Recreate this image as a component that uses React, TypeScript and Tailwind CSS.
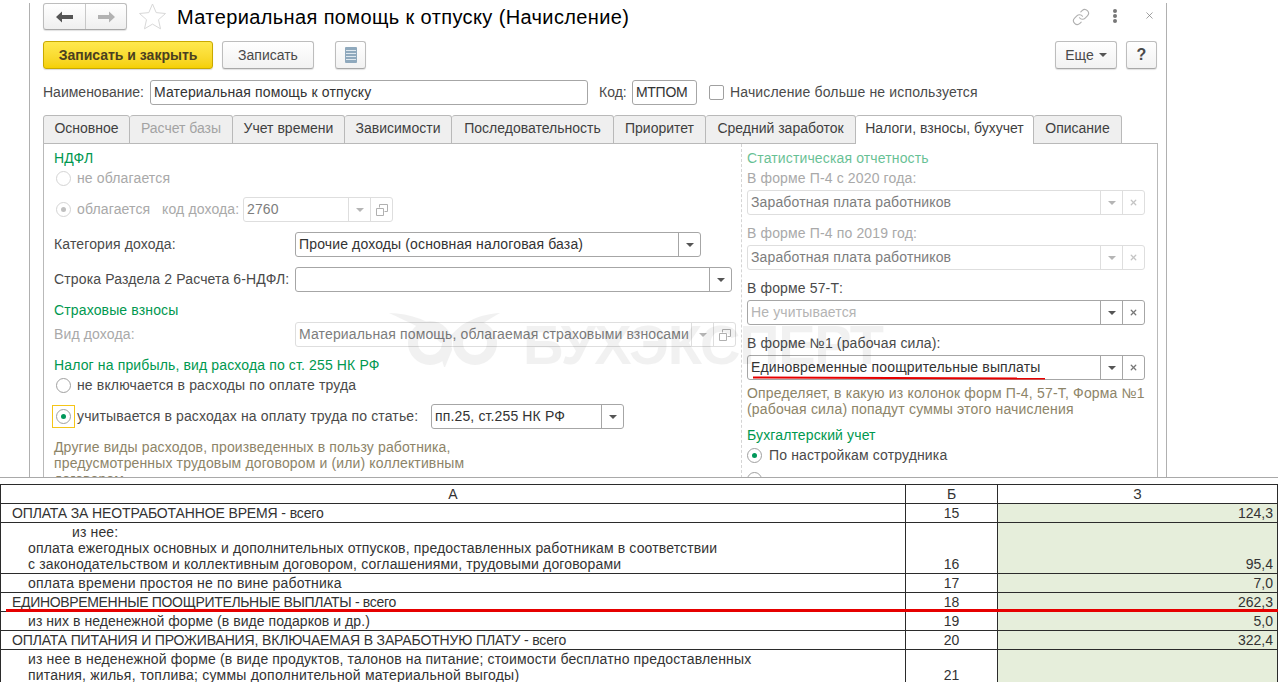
import { ReactNode } from "react";
import { Link, X } from "lucide-react";

const font = { fontFamily: '"Liberation Sans", Arial, sans-serif' };

const tabs = [
  { label: "Основное", w: "w-[87px]" },
  { label: "Расчет базы", w: "w-[103px]", off: true },
  { label: "Учет времени", w: "w-[112px]" },
  { label: "Зависимости", w: "w-[107px]" },
  { label: "Последовательность", w: "w-[162px]" },
  { label: "Приоритет", w: "w-[92px]" },
  { label: "Средний заработок", w: "w-[150px]" },
  { label: "Налоги, взносы, бухучет", w: "w-[178px]", active: true },
  { label: "Описание", w: "w-[88px]" },
];

const rows = [
  { h: "h-[19px]", a: "ОПЛАТА ЗА НЕОТРАБОТАННОЕ ВРЕМЯ - всего", pad: "pl-[11px] tracking-[-0.13px]", b: "15", c: "124,3" },
  {
    h: "h-[51px]",
    a: (
      <>
        <span className="block pl-[44px]">из нее:</span>
        оплата ежегодных основных и дополнительных отпусков, предоставленных работникам в соответствии
        <br />с законодательством и коллективным договором, соглашениями, трудовыми договорами
      </>
    ),
    pad: "pl-[27px] tracking-[0.145px]",
    b: "16",
    c: "95,4",
  },
  { h: "h-[19px]", a: "оплата времени простоя не по вине работника", pad: "pl-[27px] tracking-[0.2px]", b: "17", c: "7,0" },
  { h: "h-[19px]", a: "ЕДИНОВРЕМЕННЫЕ ПООЩРИТЕЛЬНЫЕ ВЫПЛАТЫ - всего", pad: "pl-[11px] tracking-[-0.33px]", b: "18", c: "262,3" },
  { h: "h-[19px]", a: "из них в неденежной форме (в виде подарков и др.)", pad: "pl-[27px] tracking-[0.06px]", b: "19", c: "5,0" },
  { h: "h-[19px]", a: "ОПЛАТА ПИТАНИЯ И ПРОЖИВАНИЯ, ВКЛЮЧАЕМАЯ В ЗАРАБОТНУЮ ПЛАТУ - всего", pad: "pl-[11px] tracking-[-0.15px]", b: "20", c: "322,4" },
  {
    h: "h-[35px]",
    a: (
      <>
        <span className="tracking-[0.15px]">
          из нее в неденежной форме (в виде продуктов, талонов на питание; стоимости бесплатно предоставленных
        </span>
        <br />
        <span className="tracking-[0.22px]">питания, жилья, топлива; суммы дополнительной материальной выгоды)</span>
      </>
    ),
    pad: "pl-[27px]",
    b: "21",
    c: "",
  },
];

function Caret({ off }: { off?: boolean }) {
  return (
    <svg width="8" height="4" viewBox="0 0 8 4">
      <path d="M0 0h8L4 4z" fill={off ? "#b5b5b5" : "#555"} />
    </svg>
  );
}

function CopyIcon() {
  return (
    <svg width="12" height="12" viewBox="0 0 12 12" fill="none" stroke="#b0b0b0">
      <path d="M3.5 3.5v-3h8v7h-3" />
      <path d="M.5 4.5h7v7h-7z" />
    </svg>
  );
}

function Cross({ off }: { off?: boolean }) {
  return <X size={9} strokeWidth={3.5} color={off ? "#c4c4c4" : "#777"} />;
}

// поле ввода 1С: текст и кнопки справа
function Field({
  w,
  text,
  off,
  placeholder,
  icons,
}: {
  w: string;
  text?: string;
  off?: boolean;
  placeholder?: boolean;
  icons: ReactNode[];
}) {
  return (
    <div
      className={`${w} h-[25px] flex rounded-[3px] border bg-white shrink-0 ${off ? "border-[#dedede]" : "border-[#a6a6a6]"}`}
    >
      <div
        className={`flex-1 min-w-0 pl-[3px] leading-[23px] whitespace-nowrap overflow-hidden ${
          placeholder ? "text-[#b4b4b4]" : off ? "text-[#7d7d7d]" : "text-[#333]"
        }`}
      >
        {text}
      </div>
      {icons.map((ic, i) => (
        <div
          key={i}
          className={`w-[22px] flex items-center justify-center border-l ${off ? "border-[#dedede]" : "border-[#a6a6a6]"}`}
        >
          {ic}
        </div>
      ))}
    </div>
  );
}

function Radio({ on, off }: { on?: boolean; off?: boolean }) {
  return (
    <span
      className={`w-[15px] h-[15px] rounded-full border flex items-center justify-center shrink-0 bg-white ${
        off ? "border-[#d4d4d4]" : "border-[#a0a0a0]"
      }`}
    >
      {on && <span className={`w-[5px] h-[5px] rounded-full ${off ? "bg-[#c0c0c0]" : "bg-[#00985a]"}`} />}
    </span>
  );
}

function Btn({ w, children, className = "" }: { w: string; children: ReactNode; className?: string }) {
  return (
    <div
      className={`${w} h-[28px] flex items-center justify-center rounded-[3px] border border-[#bdbdbd] border-b-[#a8a8a8] bg-gradient-to-b from-white to-[#f2f2f2] shadow-[0_1px_1px_rgba(0,0,0,0.12)] text-[#4a4a4a] ${className}`}
    >
      {children}
    </div>
  );
}

function Section({ children, className = "" }: { children: ReactNode; className?: string }) {
  return <div className={`h-[16px] leading-[16px] text-[#00984f] ${className}`}>{children}</div>;
}

function Label({ children, className = "text-[#4a4a4a]" }: { children: ReactNode; className?: string }) {
  return <div className={`h-[16px] leading-[16px] whitespace-nowrap ${className}`}>{children}</div>;
}

export default function App() {
  return (
    <div className="relative w-[1278px] h-[682px] overflow-hidden bg-white text-[14px]" style={font}>
      {/* форма 1С */}
      <div className="h-[478px] border-b border-[#a9a9a9] overflow-hidden">
        <div className="relative ml-[29px] w-[1138px] h-full border-x border-[#b0b0b0] pl-[13px] pr-[8px]">
          <div className="flex items-center h-[27px] mt-[3px] pr-[1px]">
            <div className="flex w-[84px] h-[27px] rounded-[3px] border border-[#bdbdbd] border-b-[#a8a8a8] bg-gradient-to-b from-white to-[#efefef] shadow-[0_1px_1px_rgba(0,0,0,0.12)]">
              <div className="w-[42px] flex items-center justify-center border-r border-[#c8c8c8]">
                <svg width="17" height="12" viewBox="0 0 17 12">
                  <path d="M0 6l6-5.5V4h11v4H6v3.5z" fill="#555" />
                </svg>
              </div>
              <div className="flex-1 flex items-center justify-center">
                <svg width="17" height="12" viewBox="0 0 17 12">
                  <path d="M17 6l-6-5.5V4H0v4h11v3.5z" fill="#b2b2b2" />
                </svg>
              </div>
            </div>
            <svg className="ml-[12px]" width="27" height="27" viewBox="0 0 27 27" fill="#fff" stroke="#d8d8d8">
              <path d="M13.5 1l3.7 8.6 9.3.9-7 6.2 2 9.1-8-4.7-8 4.7 2-9.1-7-6.2 9.3-.9z" />
            </svg>
            <div className="ml-[11px] text-[20px] tracking-[0.38px] text-black whitespace-nowrap">
              Материальная помощь к отпуску (Начисление)
            </div>
            <Link className="ml-auto mr-[23px]" size={18} color="#b0b0b0" strokeWidth={1.5} />
            <div className="flex flex-col gap-[1px] mr-[27px] -mt-[2px]">
              <span className="w-[4px] h-[4px] rounded-full bg-[#777]" />
              <span className="w-[4px] h-[4px] rounded-full bg-[#777]" />
              <span className="w-[4px] h-[4px] rounded-full bg-[#777]" />
            </div>
            <X className="mr-[2px] -mt-[2px]" size={11} color="#777" strokeWidth={1.5} />
          </div>

          <div className="flex items-center mt-[11px]">
            <div className="w-[170px] h-[28px] flex items-center justify-center rounded-[3px] border border-[#c9a900] bg-gradient-to-b from-[#ffe94d] to-[#f5d000] font-bold text-[#4a4020] shadow-[0_1px_1px_rgba(0,0,0,0.15)]">
              Записать и закрыть
            </div>
            <Btn w="w-[92px]" className="ml-[9px]">
              Записать
            </Btn>
            <Btn w="w-[31px]" className="ml-[21px]">
              <svg width="12" height="16" viewBox="0 0 12 16">
                <rect width="12" height="16" rx="1" fill="#8fa9bd" />
                <path d="M1 3.5h10M1 6.5h10M1 9.5h10M1 12.5h10" stroke="#dfe8ef" />
              </svg>
            </Btn>
            <Btn w="w-[62px]" className="ml-auto gap-[5px]">
              Еще
              <Caret />
            </Btn>
            <Btn w="w-[31px]" className="ml-[9px] mr-[1px] font-bold text-[16px]">
              ?
            </Btn>
          </div>

          <div className="flex items-center mt-[11px] h-[25px] text-[#4a4a4a]">
            <div className="w-[107px]">Наименование:</div>
            <div className="w-[438px] h-[25px] pl-[3px] leading-[23px] tracking-[0.14px] rounded-[3px] border border-[#a6a6a6] text-[#333]">
              Материальная помощь к отпуску
            </div>
            <div className="ml-[11px] w-[33px]">Код:</div>
            <div className="w-[65px] h-[25px] pl-[3px] leading-[23px] tracking-[-0.3px] rounded-[3px] border border-[#a6a6a6] text-[#333]">
              МТПОМ
            </div>
            <div className="ml-[12px] w-[15px] h-[15px] rounded-[2px] border border-[#a0a0a0]" />
            <div className="ml-[6px] tracking-[0.15px]">Начисление больше не используется</div>
          </div>

          <div className="flex mt-[10px] h-[28px]">
            {tabs.map((t) => (
              <div
                key={t.label}
                className={`${t.w} relative z-10 h-[29px] text-center leading-[25px] border-t border-r border-[#b9b9b9] first:border-l rounded-t-[3px] whitespace-nowrap ${
                  t.active ? "bg-white" : "bg-[#efefef] border-b"
                } ${t.off ? "text-[#a3a3a3]" : "text-[#3f3f3f]"}`}
              >
                {t.label}
              </div>
            ))}
          </div>

          <div className="h-[340px] border-t border-x border-[#b9b9b9] flex text-[14px] tracking-[0.14px]">
            {/* левая колонка */}
            <div className="w-[697px] pl-[10px] pt-[6px] shrink-0">
              <Section>НДФЛ</Section>
              <div className="flex items-center h-[16px] mt-[4px] pl-[2px] gap-[6px] text-[#a9a9a9]">
                <Radio off />
                не облагается
              </div>
              <div className="flex items-center h-[25px] mt-[11px] pl-[2px] text-[#a9a9a9]">
                <Radio off on />
                <span className="ml-[6px] w-[85px]">облагается</span>
                <span className="w-[81px] whitespace-nowrap">код дохода:</span>
                <Field w="w-[150px]" off text="2760" icons={[<Caret off />, <CopyIcon />]} />
              </div>
              <div className="flex items-center mt-[10px] text-[#4a4a4a]">
                <div className="w-[241px]">Категория дохода:</div>
                <Field w="w-[406px]" text="Прочие доходы (основная налоговая база)" icons={[<Caret />]} />
              </div>
              <div className="flex items-center mt-[10px] text-[#4a4a4a]">
                <div className="w-[241px] whitespace-nowrap">Строка Раздела 2 Расчета 6-НДФЛ:</div>
                <Field w="w-[437px]" icons={[<Caret />]} />
              </div>
              <Section className="mt-[10px]">Страховые взносы</Section>
              <div className="flex items-center mt-[4px] text-[#a9a9a9]">
                <div className="w-[241px]">Вид дохода:</div>
                <Field
                  w="w-[441px]"
                  off
                  text="Материальная помощь, облагаемая страховыми взносами"
                  icons={[<Caret off />, <CopyIcon />]}
                />
              </div>
              <Section className="mt-[10px]">Налог на прибыль, вид расхода по ст. 255 НК РФ</Section>
              <div className="flex items-center h-[16px] mt-[4px] pl-[2px] gap-[6px] text-[#4a4a4a]">
                <Radio />
                не включается в расходы по оплате труда
              </div>
              <div className="flex items-center h-[25px] mt-[11px] text-[#4a4a4a]">
                <div className="-ml-[2px] w-[23px] h-[23px] flex items-center justify-center border border-[#f5c518] shrink-0">
                  <Radio on />
                </div>
                <span className="ml-[2px] w-[354px] whitespace-nowrap">учитывается в расходах на оплату труда по статье:</span>
                <Field w="w-[193px]" text="пп.25, ст.255 НК РФ" icons={[<Caret />]} />
              </div>
              <div className="mt-[10px] leading-[16px] text-[#8d8468] whitespace-nowrap">
                Другие виды расходов, произведенных в пользу работника,
                <br />
                предусмотренных трудовым договором и (или) коллективным
                <br />
                договором
              </div>
            </div>

            {/* правая колонка */}
            <div className="flex-1 pl-[5px] pt-[6px] border-l border-dashed border-[#d4d4d4]">
              <Section className="opacity-60">Статистическая отчетность</Section>
              <Label className="mt-[4px] text-[#a9a9a9]">В форме П-4 с 2020 года:</Label>
              <div className="mt-[4px]">
                <Field w="w-[398px]" off text="Заработная плата работников" icons={[<Caret off />, <Cross off />]} />
              </div>
              <Label className="mt-[10px] text-[#a9a9a9]">В форме П-4 по 2019 год:</Label>
              <div className="mt-[4px]">
                <Field w="w-[398px]" off text="Заработная плата работников" icons={[<Caret off />, <Cross off />]} />
              </div>
              <Label className="mt-[10px] text-[#4a4a4a]">В форме 57-Т:</Label>
              <div className="mt-[4px]">
                <Field w="w-[398px]" placeholder text="Не учитывается" icons={[<Caret />, <Cross />]} />
              </div>
              <Label className="mt-[10px] text-[#4a4a4a]">В форме №1 (рабочая сила):</Label>
              <div className="mt-[4px]">
                <Field w="w-[398px]" text="Единовременные поощрительные выплаты" icons={[<Caret />, <Cross />]} />
              </div>
              <div className="mt-[5px] leading-[16px] tracking-[0.18px] text-[#8d8468] whitespace-nowrap">
                Определяет, в какую из колонок форм П-4, 57-Т, Форма №1
                <br />
                (рабочая сила) попадут суммы этого начисления
              </div>
              <Section className="mt-[10px]">Бухгалтерский учет</Section>
              <div className="flex items-center gap-[7px] h-[16px] mt-[4px] text-[#4a4a4a]">
                <Radio on />
                По настройкам сотрудника
              </div>
              <div className="mt-[9px]">
                <Radio />
              </div>
            </div>
          </div>
        </div>
      </div>

      {/* таблица отчета */}
      <table className="mt-[6px] w-[1278px] table-fixed border-collapse text-[#333] leading-[16px]">
        <colgroup>
          <col className="w-[905px]" />
          <col className="w-[92px]" />
          <col />
        </colgroup>
        <tbody>
          <tr className="h-[19px]">
            <td className="border border-[#2b2b2b] p-0 pb-[1px] text-center align-bottom">А</td>
            <td className="border border-[#2b2b2b] p-0 pb-[1px] text-center align-bottom">Б</td>
            <td className="border border-[#2b2b2b] p-0 pb-[1px] text-center align-bottom">З</td>
          </tr>
          {rows.map((r) => (
            <tr key={r.b} className={r.h}>
              <td className={`border border-[#2b2b2b] p-0 pb-[1px] align-bottom whitespace-nowrap ${r.pad}`}>{r.a}</td>
              <td className="border border-[#2b2b2b] p-0 pb-[1px] text-center align-bottom">{r.b}</td>
              <td className="border border-[#2b2b2b] p-0 pb-[1px] pr-[4px] text-right align-bottom bg-[#e6eedb]">{r.c}</td>
            </tr>
          ))}
        </tbody>
      </table>

      {/* водяной знак */}
      <div className="absolute left-[388px] top-[312px] flex items-start pointer-events-none opacity-[0.05]">
        <svg width="124" height="56" viewBox="0 0 124 56" fill="none" stroke="#000" strokeWidth="10">
          <circle cx="42" cy="31" r="17" />
          <circle cx="87" cy="31" r="17" />
          <path
            d="M1 1c20 0 44 8 60 24l-8 6C40 18 20 10 1 1zM112 1c-18 1-38 8-50 24l9 5C83 18 98 9 112 1z"
            fill="#000"
            stroke="none"
          />
          <path d="M64 38l-7 17h-1l-3-11 5-8h6z" fill="#000" stroke="none" />
        </svg>
        <div className="ml-[11px] -mt-[9px] text-[56px] font-bold text-black tracking-[-1.2px] whitespace-nowrap">
          БУХЭКСПЕРТ
        </div>
      </div>

      {/* красные подчеркивания */}
      <div className="absolute left-[753px] top-[377px] w-[292px] h-[2px] bg-[#e60000] rotate-[0.2deg]" />
      <div className="absolute left-[6px] top-[609px] right-0 h-[3px] bg-[#e60000]" />
    </div>
  );
}
